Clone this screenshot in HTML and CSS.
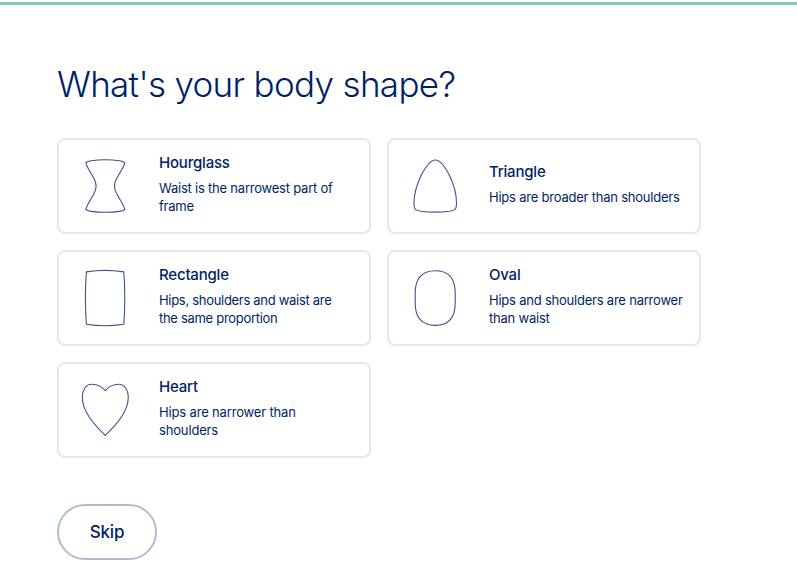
FILE: index.html
```html
<!DOCTYPE html>
<html lang="en">
<head>
<meta charset="utf-8">
<title>Body shape</title>
<link rel="stylesheet" href="styles.css">
</head>
<body>
<div class="progress"></div>
<main class="page">
  <h1 class="heading">What's your body shape?</h1>
  <div class="options">
    <div class="card">
      <svg class="shape" viewBox="0 0 64 64"><path d="M12.8 8.8Q15 7.3 18 6.8Q32.3 4.8 46.6 6.8Q50 7.3 51.8 8.8Q51 11.6 49.4 14.4L43.6 24.5Q39.4 32 43.6 39.6L49.4 49.8Q51 52.6 51.8 55.5Q50 57 46.6 57.4Q32.3 59.2 18 57.4Q15 57 12.8 55.5Q13.6 52.6 15.2 49.8L21 39.6Q25.2 32 21 24.5L15.2 14.4Q13.6 11.6 12.8 8.8Z"/></svg>
      <div class="copy"><h2 class="title">Hourglass</h2><p class="desc">Waist is the narrowest part of frame</p></div>
    </div>
    <div class="card">
      <svg class="shape" viewBox="0 0 64 64"><path d="M32.3 6C38 6 42.7 14 46.5 21.5C51.3 31.5 53.5 40 53.5 49C53.5 56 52 56.3 46.5 57.3Q32.3 59 18 57.3C12.5 56.3 11 56 11 49C11 40 13.3 31.5 18.1 21.5C21.9 14 26.6 6 32.3 6Z"/></svg>
      <div class="copy"><h2 class="title">Triangle</h2><p class="desc">Hips are broader than shoulders</p></div>
    </div>
    <div class="card">
      <svg class="shape" viewBox="0 0 64 64"><path d="M13.4 5.9Q32 2.9 50.8 5.9Q52.8 32.3 50.8 58.3Q32 61.3 13.4 58.3Q11.4 32.3 13.4 5.9Z"/></svg>
      <div class="copy"><h2 class="title">Rectangle</h2><p class="desc desc-tight">Hips, shoulders and waist are the same proportion</p></div>
    </div>
    <div class="card">
      <svg class="shape" viewBox="0 0 64 64"><path d="M32.2 4.7C46 4.7 52.2 13 52.2 27V37C52.2 51 46 59.4 32.2 59.4C18.4 59.4 12.2 51 12.2 37V27C12.2 13 18.4 4.7 32.2 4.7Z"/></svg>
      <div class="copy"><h2 class="title">Oval</h2><p class="desc">Hips and shoulders are narrower than waist</p></div>
    </div>
    <div class="card">
      <svg class="shape" viewBox="0 0 64 64"><path d="M32.3 12.7C27 6.2 21 6.3 18.8 6.3C13 6.3 9.3 12 9.3 19C9.3 33 20 45.5 32.3 57.4C44.6 45.5 55.3 33 55.3 19C55.3 12 51.6 6.3 45.8 6.3C43.6 6.3 37.6 6.2 32.3 12.7Z"/></svg>
      <div class="copy"><h2 class="title">Heart</h2><p class="desc desc-wide">Hips are narrower than shoulders</p></div>
    </div>
  </div>
  <button class="skip">Skip</button>
</main>
</body>
</html>
```
FILE: styles.css
```css
* { box-sizing: border-box; }
body { margin: 0; background: #fff; color: #001f65; font-family: Inter, "Liberation Sans", sans-serif; overflow: hidden; }
.progress { height: 3px; margin-top: 2px; background: #86c8bc; }
.page { padding: 56px 57px 0; }
.heading { margin: 0 0 31px; font-size: 35px; line-height: 46px; font-weight: 300; letter-spacing: -0.68px; white-space: nowrap; }
.options { display: grid; grid-template-columns: 314px 314px; grid-auto-rows: 96px; gap: 16px; }
.card { display: flex; align-items: center; padding-left: 14px; border: 2px solid #e4e8ec; border-radius: 8px; }
.shape { flex: none; width: 64px; height: 64px; margin-right: 22px; fill: none; stroke: #3d5389; stroke-width: 1.1; stroke-linejoin: round; }
.copy { width: 195px; padding-bottom: 4px; }
.title { margin: 0 0 6px; font-size: 15px; line-height: 20px; font-weight: 500; letter-spacing: -0.2px; }
.desc { margin: 0; font-size: 13px; line-height: 18px; font-weight: 400; letter-spacing: -0.22px; }
.desc-tight { max-width: 190px; letter-spacing: -0.3px; padding-right: 10px; }
.desc-wide { letter-spacing: -0.16px; }
.skip { display: block; width: 100px; height: 56px; margin-top: 46px; padding: 0; border: 2px solid #b2bbd1; border-radius: 28px; background: #fff; color: inherit; font: 500 17px/24px Inter, "Liberation Sans", sans-serif; letter-spacing: -0.2px; }
```
